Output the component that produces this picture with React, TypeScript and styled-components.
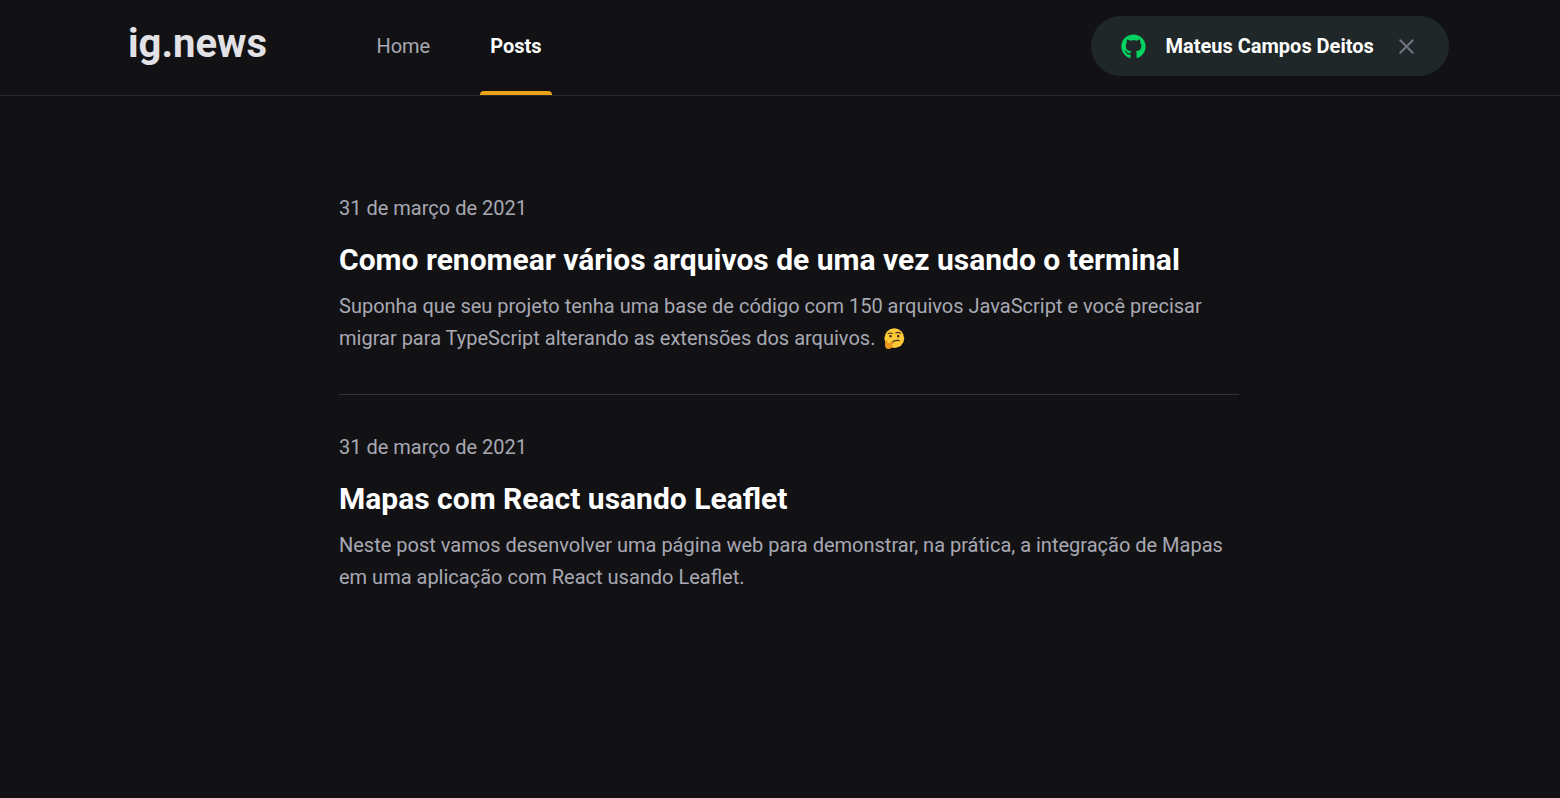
import React from "react";
import styled, { createGlobalStyle, css } from "styled-components";
import { FaGithub } from "react-icons/fa";
import { FiX } from "react-icons/fi";

const GlobalStyle = createGlobalStyle`
  * { margin: 0; padding: 0; box-sizing: border-box; }
  body {
    background: #121214;
    color: #fff;
    font-family: Roboto, "Liberation Sans", sans-serif;
    font-size: 20px;
    min-height: 100vh;
  }
`;

const Header = styled.header`
  height: 96px;
  border-bottom: 1px solid #29292e;
`;

const HeaderContent = styled.div`
  width: 1320px;
  height: 95px;
  margin-left: 129px;
  display: flex;
  align-items: center;
`;

const Logo = styled.span`
  width: 138px;
  color: #e1e1e6;
  font-size: 40px;
  font-weight: 700;
  line-height: 48px;
  white-space: nowrap;
  margin: -8px 0 0 -1px;
`;

const Nav = styled.nav`
  height: 95px;
  margin-left: 100.4px;
  display: flex;
  gap: 40px;
`;

const NavLink = styled.a<{ $active?: boolean }>`
  height: 95px;
  padding: 0 10px;
  line-height: 92px;
  color: #a8a8b3;
  text-decoration: none;
  ${({ $active }) =>
    $active &&
    css`
      color: #fff;
      font-weight: 700;
      position: relative;
      &::after {
        content: "";
        position: absolute;
        left: 0;
        right: 0;
        bottom: 0;
        height: 4px;
        border-radius: 4px 4px 0 0;
        background: #eba417;
      }
    `}
`;

const SignInButton = styled.button`
  width: 358px;
  height: 60px;
  margin: -3px 0 0 auto;
  padding: 0 30px;
  border: 0;
  border-radius: 30px;
  background: #202729;
  color: #fff;
  font: 700 20px Roboto, "Liberation Sans", sans-serif;
  display: flex;
  align-items: center;
  white-space: nowrap;
  svg { flex: none; }
`;

const UserName = styled.span`
  margin: 0 auto 0 19.5px;
`;

const PostList = styled.main`
  width: 900px;
  margin: 100px 0 0 339px;
`;

const Post = styled.article`
  & + & {
    margin-top: 40px;
    padding-top: 40px;
    border-top: 1px solid #323238;
  }
`;

const PostDate = styled.time`
  display: block;
  line-height: 24px;
  color: #a8a8b3;
`;

const PostTitle = styled.h2`
  margin-top: 22px;
  font-size: 30px;
  font-weight: 700;
  line-height: 35px;
`;

const PostExcerpt = styled.p`
  margin-top: 13px;
  color: #a8a8b3;
  line-height: 32px;
`;

const Emoji = styled.svg`
  width: 22px;
  height: 22px;
  margin: 0 0 -5px 2.6px;
`;

const ThinkingFace = () => (
  <Emoji viewBox="0 0 22 22" aria-label="pensativo">
    <circle cx="11.3" cy="10.2" r="9.9" fill="#ffca37" />
    <g fill="none" stroke="#493023" strokeLinecap="round">
      <path d="M5.2 5.6Q7.4 4.4 9.4 5.4" strokeWidth="1.1" />
      <path d="M12.8 4.9Q15 3.6 17.6 5.2" strokeWidth="1.2" />
      <path d="M9 14.4Q11.8 11.8 16.2 12.6" strokeWidth="1.3" />
    </g>
    <ellipse cx="7.5" cy="8.2" rx="1.2" ry="1.4" fill="#493023" />
    <ellipse cx="15.2" cy="8.2" rx="1.2" ry="1.4" fill="#493023" />
    <path
      d="M2.2 13.2c.3-1.2 2-1.1 2.1.2l.3 1.9 5.2-1.4c1.5-.4 2 1.3.6 1.8l-2 .8c1.5.2 1.8 1.2 1.2 2.2-.6 1.3-2.2 2.2-4.2 2.2-2.2 0-3.4-1.6-3.4-3.7z"
      fill="#e99722"
    />
  </Emoji>
);

type PostData = { date: string; title: string; excerpt: string; thinking?: boolean };

const posts: PostData[] = [
  {
    date: "31 de março de 2021",
    title: "Como renomear vários arquivos de uma vez usando o terminal",
    excerpt:
      "Suponha que seu projeto tenha uma base de código com 150 arquivos JavaScript e você precisar migrar para TypeScript alterando as extensões dos arquivos. ",
    thinking: true,
  },
  {
    date: "31 de março de 2021",
    title: "Mapas com React usando Leaflet",
    excerpt:
      "Neste post vamos desenvolver uma página web para demonstrar, na prática, a integração de Mapas em uma aplicação com React usando Leaflet.",
  },
];

export default function App() {
  return (
    <>
      <GlobalStyle />
      <Header>
        <HeaderContent>
          <Logo>ig.news</Logo>
          <Nav>
            <NavLink>Home</NavLink>
            <NavLink $active>Posts</NavLink>
          </Nav>
          <SignInButton type="button">
            <FaGithub size={25} color="#04d361" />
            <UserName>Mateus Campos Deitos</UserName>
            <FiX size={25} color="#737380" />
          </SignInButton>
        </HeaderContent>
      </Header>
      <PostList>
        {posts.map((post) => (
          <Post key={post.title}>
            <PostDate>{post.date}</PostDate>
            <PostTitle>{post.title}</PostTitle>
            <PostExcerpt>
              {post.excerpt}
              {post.thinking && <ThinkingFace />}
            </PostExcerpt>
          </Post>
        ))}
      </PostList>
    </>
  );
}
